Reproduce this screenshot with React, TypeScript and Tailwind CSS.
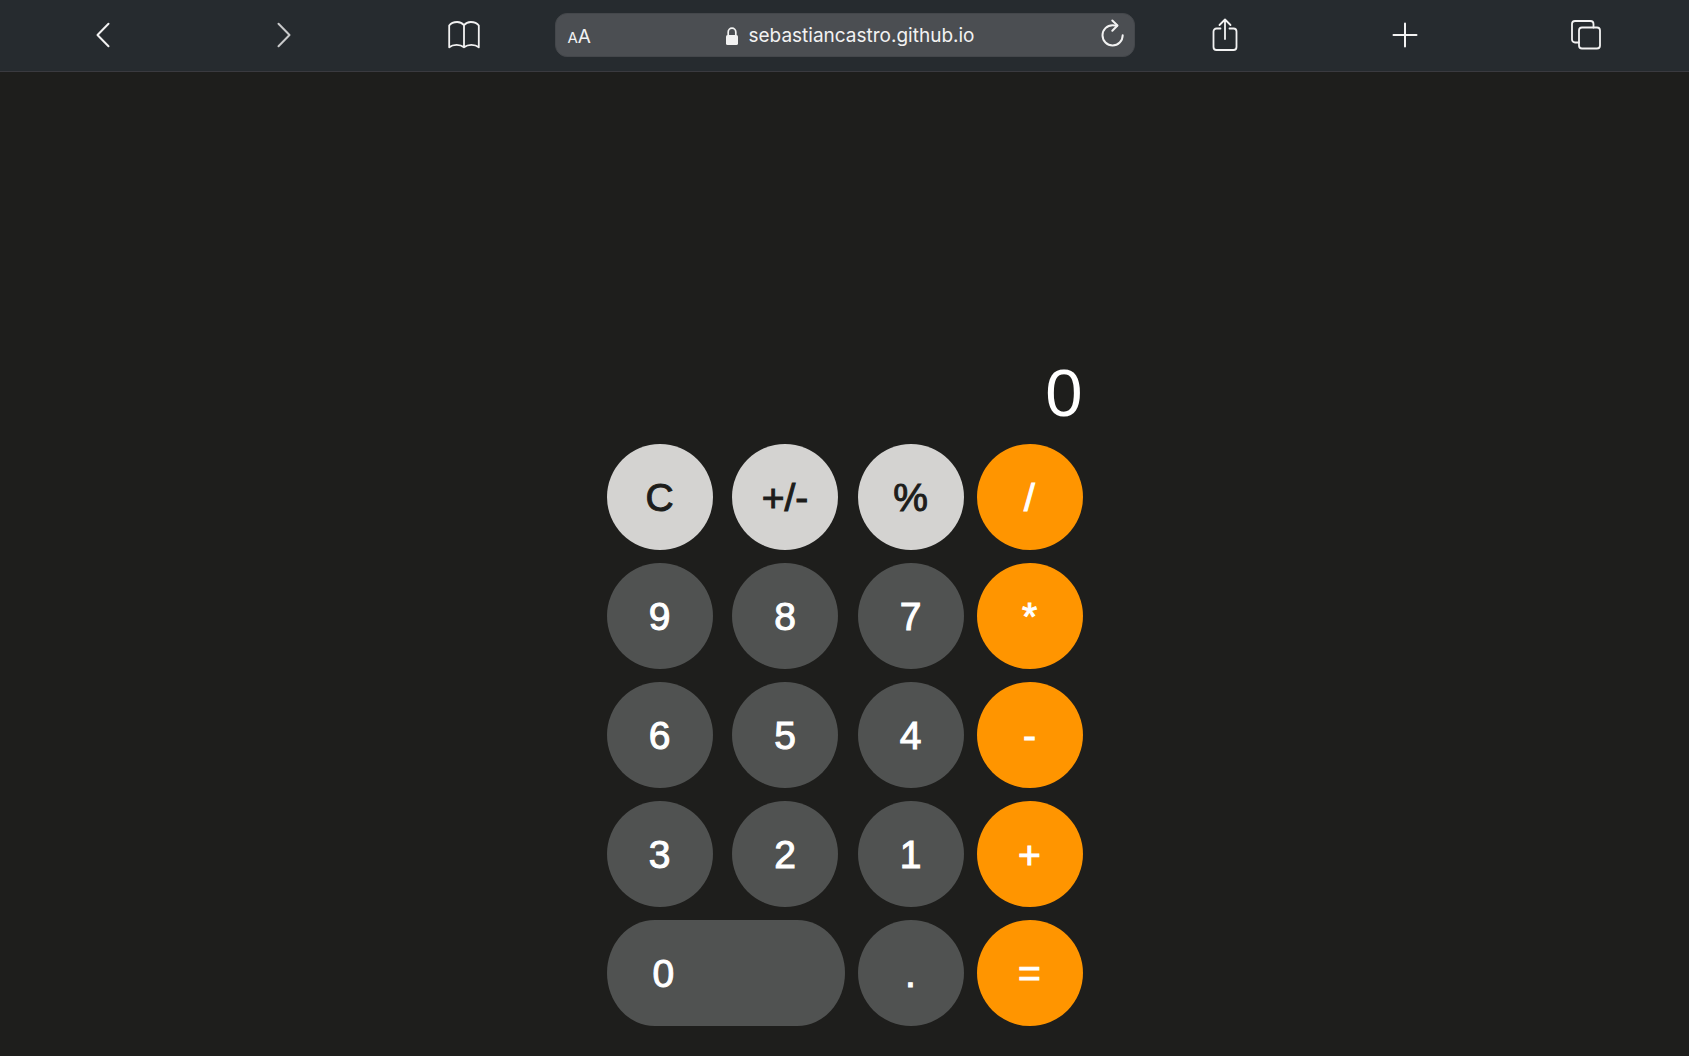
import { useState, type ReactNode } from "react";

type Tone = "light" | "dark" | "accent";

const tones: Record<Tone, string> = {
  light: "bg-[#d4d3d1] text-[#1d1d1b] [-webkit-text-stroke:1px_#1d1d1b]",
  dark: "bg-[#505251] text-white [-webkit-text-stroke:1px_#ffffff]",
  accent: "bg-[#ff9500] text-white [-webkit-text-stroke:1px_#ffffff]",
};

function Key({ label, tone, wide, onPress }: { label: string; tone: Tone; wide?: boolean; onPress: (k: string) => void }) {
  const shape = wide
    ? "w-[238px] rounded-[20%/50%] pl-[46px] text-left"
    : "w-[106px] rounded-full text-center";
  return (
    <button
      type="button"
      onClick={() => onPress(label)}
      className={`h-[106px] shrink-0 text-[39px] leading-none ${shape} ${tones[tone]}`}
    >
      {label}
    </button>
  );
}

function NavButton({ label, children }: { label: string; children: ReactNode }) {
  return (
    <button type="button" aria-label={label} className="flex h-full items-center justify-center">
      {children}
    </button>
  );
}

const stroke = {
  fill: "none",
  stroke: "currentColor",
  strokeWidth: 1.8,
  strokeLinecap: "round" as const,
  strokeLinejoin: "round" as const,
};

function BrowserBar() {
  return (
    <nav
      aria-label="Browser"
      className="grid h-[72px] grid-cols-[1fr_1fr_1fr_minmax(0,580px)_1fr_1fr_1fr] items-center border-b border-[#3a3a3f] bg-[#262b2f] px-[13px] pb-px font-[Inter,sans-serif] text-[#f2f2f2]"
    >
      <NavButton label="Back">
        <svg width="14" height="26" viewBox="0 0 14 26" {...stroke} strokeWidth={2}>
          <path d="M12.5 1.8 1.5 13l11 11.2" />
        </svg>
      </NavButton>
      <NavButton label="Forward">
        <svg width="14" height="26" viewBox="0 0 14 26" {...stroke} strokeWidth={2} className="text-[#c9cacb]">
          <path d="M1.5 1.8 12.5 13l-11 11.2" />
        </svg>
      </NavButton>
      <NavButton label="Bookmarks">
        <svg width="32" height="28" viewBox="0 0 32 28" {...stroke}>
          <path d="M16 4.300C14.300 2.100 11.900 1 9.200 1 6 1 2.900 2.100 1.200 4.500V26.300C3.100 24.700 6 23.900 8.600 23.900c2.900 0 5.400.8 7.400 2.400 2-1.600 4.500-2.400 7.400-2.400 2.600 0 5.500.8 7.400 2.400V4.500C29.100 2.100 26 1 22.800 1 20.100 1 17.700 2.100 16 4.300V26.300" />
        </svg>
      </NavButton>

      <div className="flex h-11 items-center justify-between rounded-xl border border-[#44474b] bg-[#4b4e52] pr-2 pl-3">
        <button type="button" aria-label="Page settings" className="flex w-9 items-baseline pt-1 leading-6">
          <span className="text-[15px]">A</span>
          <span className="text-[19px] leading-6">A</span>
        </button>
        <a href="#" className="flex items-center gap-2.5 pt-0.5 text-[19px] leading-6">
          <svg width="12" height="18" viewBox="0 0 12 18">
            <rect x="0" y="8" width="12" height="10" rx="1.600" fill="currentColor" />
            <path d="M2.200 8.500V5a3.800 3.800 0 0 1 7.600 0v3.500" fill="none" stroke="currentColor" strokeWidth="1.700" />
          </svg>
          sebastiancastro.github.io
        </a>
        <button type="button" aria-label="Reload" className="flex w-7 justify-end pb-1">
          <svg width="24" height="30" viewBox="0 0 24 30" {...stroke} strokeWidth={2}>
            <path d="M21.700 17.300A10.100 10.100 0 1 1 11.600 7.200c1.600 0 3.100.2 4.500.5" />
            <path d="M11.300 2.500 16.500 7.500 11.300 12.800" />
          </svg>
        </button>
      </div>

      <NavButton label="Share">
        <svg width="26" height="34" viewBox="0 0 26 34" {...stroke}>
          <path d="M8.500 10.500H4.500a3 3 0 0 0-3 3V29a3 3 0 0 0 3 3h17a3 3 0 0 0 3-3V13.500a3 3 0 0 0-3-3h-4" />
          <path d="M13 21V2M7.500 7 13 1.500 18.500 7" />
        </svg>
      </NavButton>
      <NavButton label="New tab">
        <svg width="26" height="26" viewBox="0 0 26 26" {...stroke} strokeWidth={2}>
          <path d="M13 1.500v23M1.500 13h23" />
        </svg>
      </NavButton>
      <NavButton label="Tabs">
        <svg width="30" height="30" viewBox="0 0 30 30" {...stroke}>
          <rect x="8" y="7.500" width="21" height="21" rx="3" />
          <path d="M8 22.500H4a3 3 0 0 1-3-3V4a3 3 0 0 1 3-3h15.500a3 3 0 0 1 3 3v3.500" />
        </svg>
      </NavButton>
    </nav>
  );
}

const rows: { keys: string[]; tone: Tone; operator: string }[] = [
  { keys: ["C", "+/-", "%"], tone: "light", operator: "/" },
  { keys: ["9", "8", "7"], tone: "dark", operator: "*" },
  { keys: ["6", "5", "4"], tone: "dark", operator: "-" },
  { keys: ["3", "2", "1"], tone: "dark", operator: "+" },
  { keys: ["0", "."], tone: "dark", operator: "=" },
];

function compute(a: number, b: number, op: string) {
  if (op === "+") return a + b;
  if (op === "-") return a - b;
  if (op === "*") return a * b;
  return a / b;
}

export default function App() {
  const [display, setDisplay] = useState("0");
  const [pending, setPending] = useState<{ value: number; op: string } | null>(null);
  const [fresh, setFresh] = useState(true);

  const press = (key: string) => {
    if (/^[0-9.]$/.test(key)) {
      if (key === "." && !fresh && display.includes(".")) return;
      setDisplay(fresh ? (key === "." ? "0." : key) : display + key);
      setFresh(false);
    } else if (key === "C") {
      setDisplay("0");
      setPending(null);
      setFresh(true);
    } else if (key === "+/-") {
      setDisplay(String(-Number(display)));
    } else if (key === "%") {
      setDisplay(String(Number(display) / 100));
    } else {
      const value = pending ? compute(pending.value, Number(display), pending.op) : Number(display);
      setDisplay(String(value));
      setPending(key === "=" ? null : { value, op: key });
      setFresh(true);
    }
  };

  return (
    <div className="flex min-h-screen flex-col bg-[#1e1e1c]">
      <BrowserBar />
      <main className="flex flex-1 flex-col items-center justify-end pb-[30px] font-['Liberation_Sans',Arial,sans-serif]">
        <div className="flex flex-col gap-[13px]">
          <output className="block pb-0.5 text-right text-[67px] leading-[72px] text-white">{display}</output>
          {rows.map((row) => (
            <div key={row.operator} className="flex gap-[13px]">
              <div className="flex w-[357px] justify-between">
                {row.keys.map((k) => (
                  <Key key={k} label={k} tone={row.tone} wide={k === "0"} onPress={press} />
                ))}
              </div>
              <Key label={row.operator} tone="accent" onPress={press} />
            </div>
          ))}
        </div>
      </main>
    </div>
  );
}
